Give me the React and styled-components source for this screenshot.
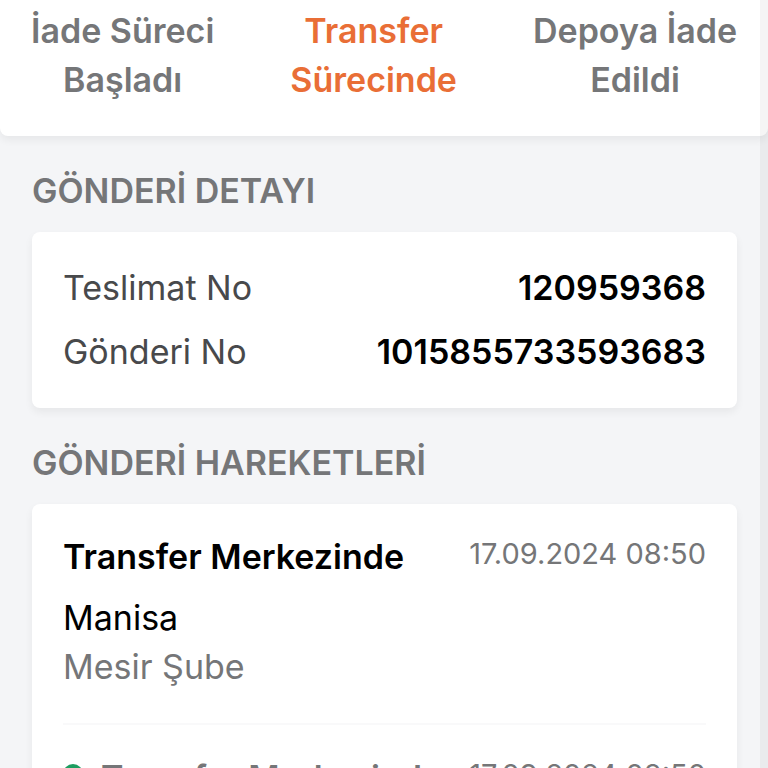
import React from 'react';
import styled, { createGlobalStyle } from 'styled-components';

const App = () => {
    return (
        <Page>
            <GlobalStyle />
            <Steps>
                <Step>{'İade\u00a0Süreci Başladı'}</Step>
                <Step $active>Transfer Sürecinde</Step>
                <Step>{'Depoya\u00a0İade Edildi'}</Step>
            </Steps>
            <Content>
                <Heading>GÖNDERİ DETAYI</Heading>
                <Details>
                    <DetailRow>
                        <dt>Teslimat No</dt>
                        <dd>120959368</dd>
                    </DetailRow>
                    <DetailRow>
                        <dt>Gönderi No</dt>
                        <dd>1015855733593683</dd>
                    </DetailRow>
                </Details>
                <Heading>GÖNDERİ HAREKETLERİ</Heading>
                <Movements>
                    <Movement>
                        <MovementTop>
                            <Status>Transfer Merkezinde</Status>
                            <Time>17.09.2024 08:50</Time>
                        </MovementTop>
                        <City>Manisa</City>
                        <Branch>Mesir Şube</Branch>
                    </Movement>
                    <Movement>
                        <MovementTop>
                            <Status $past><Dot />Transfer Merkezinde</Status>
                            <Time>17.09.2024 08:50</Time>
                        </MovementTop>
                    </Movement>
                </Movements>
            </Content>
            <ScrollTrack />
        </Page>
    );
}

export default App;

const GlobalStyle = createGlobalStyle`
    * {
        box-sizing: border-box;
    }
    body {
        margin: 0;
        background-color: #f4f5f7;
        font-family: Inter, "Liberation Sans", sans-serif;
    }
`

const Page = styled.div`
    position: relative;
    height: 100vh;
    overflow: hidden;
`

const Steps = styled.div`
    display: flex;
    justify-content: space-between;
    padding: 6px 31px 32px;
    background-color: #fff;
    border-radius: 0 0 8px 8px;
    box-shadow: 0 4px 8px rgba(0, 0, 0, 0.06);
`

const Step = styled.div`
    width: min-content;
    font-size: 34px;
    line-height: 49px;
    font-weight: 600;
    text-align: center;
    color: ${({ $active }) => ($active ? '#e96e36' : '#757678')};
`

const Content = styled.main`
    padding: 31px 31px 31px 32px;
`

const Heading = styled.h2`
    margin: 0 0 17px;
    font-size: 34px;
    line-height: 48px;
    font-weight: 600;
    color: #757678;
`

const Card = styled.div`
    margin: 0 0 31px;
    background-color: #fff;
    border-radius: 8px;
    box-shadow: 0 4px 8px rgba(0, 0, 0, 0.06);
`

const Details = styled(Card).attrs({ as: 'dl' })`
    display: flex;
    flex-direction: column;
    gap: 16px;
    padding: 32px 31px;
`

const DetailRow = styled.div`
    display: flex;
    justify-content: space-between;
    font-size: 34px;
    line-height: 48px;
    dt {
        color: #48494b;
    }
    dd {
        margin: 0;
        font-weight: 600;
        color: #000;
    }
`

const Movements = styled(Card)`
    padding: 0 31px;
`

const Movement = styled.article`
    padding: 29px 0 32px;
    & + & {
        border-top: 2px solid #f9f9fa;
    }
`

const MovementTop = styled.div`
    display: flex;
    justify-content: space-between;
`

const Status = styled.h3`
    display: flex;
    gap: 18px;
    margin: 0;
    font-size: 34px;
    line-height: 48px;
    font-weight: 600;
    white-space: nowrap;
    color: ${({ $past }) => ($past ? '#757678' : '#000')};
`

const Dot = styled.span`
    width: 20px;
    height: 20px;
    margin-top: 10px;
    border-radius: 50%;
    background-color: #1d9d60;
`

const Time = styled.time`
    font-size: 29px;
    line-height: 42px;
    white-space: nowrap;
    color: #757678;
`

const City = styled.div`
    margin-top: 12px;
    font-size: 34px;
    line-height: 49px;
    color: #000;
`

const Branch = styled.div`
    font-size: 34px;
    line-height: 49px;
    color: #757678;
`

/* overlay scroll bar at the right edge */
const ScrollTrack = styled.div`
    position: absolute;
    top: 0;
    right: 0;
    bottom: 0;
    width: 8px;
    background-color: rgba(0, 0, 0, 0.04);
`
